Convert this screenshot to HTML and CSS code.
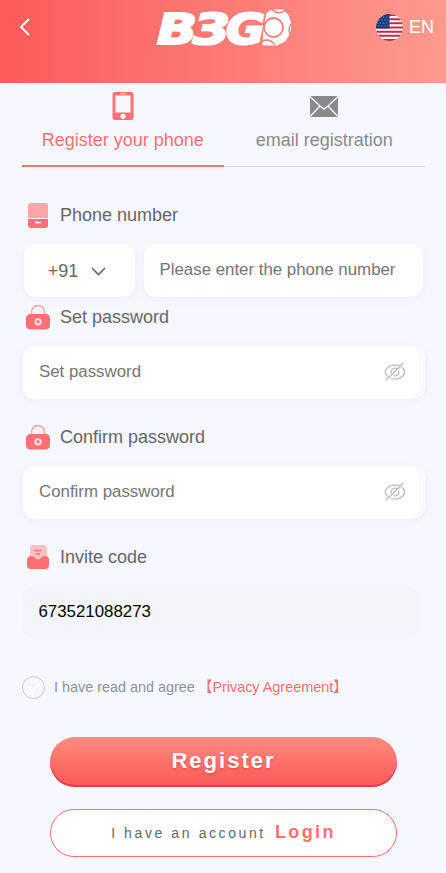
FILE: index.html
```html
<!DOCTYPE html>
<html lang="en">
<head>
<meta charset="utf-8">
<title>Register</title>
<link rel="stylesheet" href="styles.css">
</head>
<body>
<svg width="0" height="0" class="defs">
  <symbol id="lock" viewBox="0 0 24 26">
    <path d="M5.500 12V8a6.500 6.500 0 0 1 13 0V12" fill="none" stroke="#ffa5a8" stroke-width="1.600"/>
    <rect y="10" width="24" height="15.500" rx="4.500" fill="#ff7073"/>
    <circle cx="12" cy="17.800" r="2.800" fill="#ff8f91" stroke="#ffe3e5" stroke-width="1.700"/>
  </symbol>
  <symbol id="eye" viewBox="0 0 22 20">
    <g fill="none" stroke="#c5c5c7" stroke-width="1.600">
      <ellipse cx="11" cy="10" rx="9.700" ry="7"/>
      <circle cx="11" cy="10" r="3.800"/>
      <path d="M3.300 19L20.300 2" stroke="#fff" stroke-width="1.200"/>
      <path d="M2 18.500L19.500 1.200" stroke-width="1.700"/>
    </g>
  </symbol>
</svg>
<header class="header">
  <svg class="back" width="12" height="18" viewBox="0 0 12 18"><path d="M10 1L2 9l8 8" fill="none" stroke="#fff" stroke-width="2"/></svg>
  <svg class="logo" width="142" height="64" viewBox="0 0 142 64">
    <path d="M113 13l5-3h11l5 5 3 9-1 9-5 8-8 4h-14l1-16z" fill="#fff" stroke="#fff" stroke-width="1" stroke-linejoin="round"/>
    <g fill="none" stroke="#ff7d77" stroke-width="1.500">
      <circle cx="119.500" cy="27.500" r="9.500" stroke-width="1.800"/>
      <path d="M118 9.500q6 6 13 1M138 23q-5 5-1.500 12M108 41q8-3 13 4"/>
    </g>
    <g class="logo-text">
      <text x="3" y="43.500" textLength="40" lengthAdjust="spacingAndGlyphs">B</text>
      <text x="39" y="43.500" textLength="37" lengthAdjust="spacingAndGlyphs">3</text>
      <text x="72" y="43.500" textLength="39" lengthAdjust="spacingAndGlyphs">G</text>
    </g>
  </svg>
  <div class="lang">
    <svg width="27" height="27" viewBox="0 0 27 27">
      <clipPath id="flag"><circle cx="13.500" cy="13.500" r="13.500"/></clipPath>
      <g clip-path="url(#flag)">
        <path fill="#fff" d="M0 0h27v27H0z"/>
        <path stroke="#c92745" stroke-width="2.080" d="M0 1h27M0 5.200h27M0 9.300h27M0 13.500h27M0 17.700h27M0 21.800h27M0 26h27"/>
        <path fill="#153a78" d="M0 0h13.500v14.500H0z"/>
        <path d="M1 3h12M2.500 6h11M1 9h12M2.500 12h11" stroke="#7f9cc4" stroke-width="1.200" stroke-dasharray="1.200 1.800"/>
      </g>
    </svg>
    <span>EN</span>
  </div>
</header>
<main class="page">
  <nav class="tabs">
    <a class="tab active">
      <svg width="22" height="28" viewBox="0 0 22 28"><rect x=".5" width="21" height="28" rx="2.500" fill="#ff7073"/><path fill="#f7f8ff" stroke="#ffb5b8" d="M3.500 3.500h15v17h-15z"/><path stroke="#ffd4d7" stroke-width="1.200" d="M8.500 1.700h5"/><circle cx="11" cy="24.300" r="2.600" fill="#fff"/></svg>
      <span>Register your phone</span>
    </a>
    <a class="tab">
      <svg width="28" height="28" viewBox="0 0 28 28"><rect y="4" width="28" height="21" rx="1.500" fill="#8a8a8a"/><path d="M.5 5l9.500 9 4 3 4-3 9.500-9M.5 24l9.500-10M27.500 24l-9.500-10" fill="none" stroke="#f7f8ff" stroke-width="1.400"/></svg>
      <span>email registration</span>
    </a>
  </nav>
  <section class="group phone">
    <h2 class="label"><svg width="24" height="26" viewBox="0 0 24 26"><path d="M2 16V4a3 3 0 0 1 3-3h14a3 3 0 0 1 3 3v12z" fill="#ffa5a8"/><path d="M2 17h20v6a3 3 0 0 1-3 3H5a3 3 0 0 1-3-3z" fill="#ff7073"/><path d="M9 20.500h6" stroke="#fff" stroke-width="1.500"/></svg>Phone number</h2>
    <div class="phone-row">
      <div class="box code"><span>+91</span><svg width="15" height="9" viewBox="0 0 15 9"><path d="M1 1l6.500 6.500L14 1" fill="none" stroke="#666" stroke-width="1.600"/></svg></div>
      <div class="box number">Please enter the phone number</div>
    </div>
  </section>
  <section class="group">
    <h2 class="label"><svg width="24" height="26"><use href="#lock"/></svg>Set password</h2>
    <div class="wrap"><div class="box">Set password<svg width="22" height="20"><use href="#eye"/></svg></div></div>
  </section>
  <section class="group">
    <h2 class="label"><svg width="24" height="26"><use href="#lock"/></svg>Confirm password</h2>
    <div class="wrap"><div class="box">Confirm password<svg width="22" height="20"><use href="#eye"/></svg></div></div>
  </section>
  <section class="group">
    <h2 class="label"><svg width="24" height="26" viewBox="0 0 24 26"><path d="M4 18V4a3 3 0 0 1 3-3h11a3 3 0 0 1 3 3v14z" fill="#ffc0c4"/><path d="M8.500 6.500h7M10 10h4" stroke="#ff7073" stroke-width="1.500"/><path d="M1 16q0-4 4-4 3 0 4 2 3 3 6 0 1-2 4-2 4 0 4 4v5q0 4-4 4H5q-4 0-4-4z" fill="#ff7073"/></svg>Invite code</h2>
    <div class="box invite">673521088273</div>
  </section>
  <div class="agree">
    <svg width="23" height="23" viewBox="0 0 23 23"><circle cx="11.500" cy="11.500" r="11" fill="#f6f7fc" stroke="#c8c9cc"/><path d="M6 11.500l4 4 7.500-8" fill="none" stroke="#fff" stroke-width="2"/></svg>
    <span>I have read and agree</span><a>【Privacy Agreement】</a>
  </div>
  <button class="register">Register</button>
  <button class="login"><span>I have an account</span><b>Login</b></button>
</main>
</body>
</html>
```
FILE: styles.css
```css
* { box-sizing: border-box; }
body {
  margin: 0;
  height: 873px;
  overflow: hidden;
  background: #f7f8ff;
  color: #666;
  font-family: "Liberation Sans", "Noto Sans CJK SC", sans-serif;
}
svg { display: block; flex: none; }
.defs { position: absolute; }
.header {
  height: 83px;
  display: grid;
  grid-template-columns: 135px 1fr 70px;
  align-items: start;
  padding-left: 19px;
  background: linear-gradient(90deg, #fb5a5a, #ff9a8e);
}
.back { margin-top: 18px; }
.logo-text {
  font: italic bold 43px "DejaVu Sans", sans-serif;
  fill: #fff;
  stroke: #fff;
  stroke-width: 2.2px;
}
.lang {
  display: flex;
  align-items: center;
  gap: 6px;
  margin-top: 14px;
  color: #fff;
  font-size: 18px;
}
.page { padding: 0 21px 0 22px; }
.tabs {
  display: flex;
  height: 84px;
  box-shadow: inset 0 -1px #dcdde2;
}
.tab {
  width: 202px;
  display: flex;
  flex-direction: column;
  align-items: center;
  padding-top: 9px;
  gap: 9px;
  font-size: 18px;
  line-height: 22px;
  color: #8a8a8a;
}
.tab.active { color: #ff7073; border-bottom: 2px solid #ff7073; }
.group { height: 120px; }
.group.phone { height: 102px; margin-top: 35px; }
.label {
  display: flex;
  align-items: center;
  gap: 10px;
  height: 26px;
  margin: 0 0 16px 4px;
  font-size: 18px;
  font-weight: normal;
}
.phone-row { display: flex; gap: 9px; padding-left: 2px; }
.box {
  height: 53px;
  display: flex;
  align-items: center;
  justify-content: space-between;
  padding: 0 13px 1px 15.5px;
  border-radius: 12px;
  background: #fff;
  color: #757575;
  font-size: 16.85px;
}
.phone-row .box { box-shadow: 0 2px 8px #d0d0ed40; }
.code {
  width: 111px;
  justify-content: center;
  gap: 13px;
  padding: 1px 5px 0 0;
  color: #666;
  font-size: 18px;
}
.number { width: 279px; padding-left: 15.5px; }
.wrap {
  width: 403px;
  padding: 0 6px 0 1.5px;
  border-radius: 12px;
  background: #f9f9ff;
  box-shadow: 0 2px 8px #d0d0ed40;
}
.invite {
  width: 396px;
  margin-left: 1px;
  background: #f4f5fa;
  color: #000;
}
.agree {
  display: flex;
  align-items: center;
  height: 23px;
  margin-top: 12px;
  font-size: 14.4px;
  line-height: 20px;
  color: #8d90a0;
}
.agree span { margin: 0 0 2px 9px; width: 145px; }
.agree a { color: #ff7073; margin: 0 0 2px -1px; }
button { display: flex; width: 347px; margin-left: 28px; font-family: inherit; justify-content: center; }
.register {
  height: 50px;
  margin-top: 38px;
  padding: 0 0 3px;
  align-items: center;
  border: 0;
  border-radius: 25px;
  background: linear-gradient(#ff8b7e, #fb5858);
  box-shadow: inset 0 -2px #e63d45;
  color: #fff;
  font-size: 22px;
  font-weight: bold;
  letter-spacing: 2px;
  text-shadow: 0 2px 2px #c9434880;
}
.login {
  height: 48px;
  margin-top: 22px;
  padding: 0 0 1px;
  align-items: center;
  gap: 9px;
  border: 1px solid #ff7073;
  border-radius: 24px;
  background: #fff;
  color: #666;
  font-size: 14px;
  letter-spacing: 2.6px;
}
.login b { color: #ff7073; font-size: 18px; letter-spacing: 2.4px; }
```
